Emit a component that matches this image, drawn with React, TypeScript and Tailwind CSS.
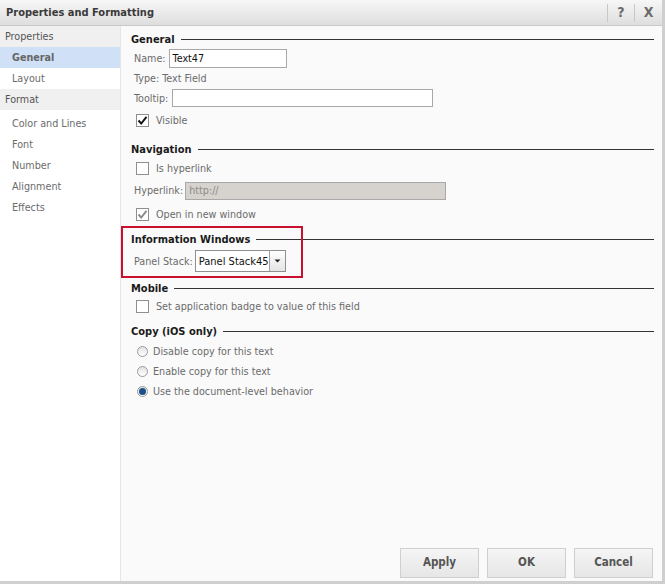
import React from "react";

const font = { fontFamily: "Tahoma, 'DejaVu Sans Condensed', 'Liberation Sans', Arial, sans-serif" };

function Header({ title }: { title: string }) {
  return (
    <div className="flex items-center h-[14px]">
      <span className="text-[11px] font-bold text-[#1a1a1a] leading-none pr-[6px]">{title}</span>
      <div className="flex-1 h-px bg-[#333]" />
    </div>
  );
}

function Check({ checked, disabled }: { checked?: boolean; disabled?: boolean }) {
  return (
    <div className="w-[13px] h-[13px] mt-px border border-[#8f8f8f] bg-white flex items-center justify-center shrink-0">
      {checked && (
        <svg width="11" height="11" viewBox="0 0 11 11">
          <path d="M1.5 5.5 L4.2 8.5 L9.5 1.8" fill="none" stroke={disabled ? "#8a8a8a" : "#111"} strokeWidth="1.9" />
        </svg>
      )}
    </div>
  );
}

function Radio({ checked }: { checked?: boolean }) {
  return (
    <div className="w-[11px] h-[11px] mt-px rounded-full border border-[#9a9a9a] bg-gradient-to-b from-[#e2e2e2] to-white flex items-center justify-center shrink-0">
      {checked && <div className="w-[7px] h-[7px] rounded-full bg-[#1d4f8a]" />}
    </div>
  );
}

function T({ children, className = "" }: { children: React.ReactNode; className?: string }) {
  return <span className={"pt-[2px] whitespace-nowrap " + className}>{children}</span>;
}

export default function App() {
  const side = [
    { t: "Properties", kind: "head" },
    { t: "General", kind: "sel" },
    { t: "Layout", kind: "item" },
    { t: "Format", kind: "head" },
    { t: "Color and Lines", kind: "item", first: true },
    { t: "Font", kind: "item" },
    { t: "Number", kind: "item" },
    { t: "Alignment", kind: "item" },
    { t: "Effects", kind: "item" },
  ];
  return (
    <div style={font} className="w-[665px] h-[584px] bg-[#cfcfcf] flex flex-col overflow-hidden text-[10.7px]">
      <div className="w-[662px] h-[581px] flex flex-col bg-white">
        {/* title bar */}
        <div className="h-[26px] flex items-center bg-gradient-to-b from-[#f7f7f7] to-[#dedede] border-b border-[#c9c9c9] shrink-0">
          <span className="pl-[6px] pt-px text-[11px] font-bold text-[#3a3a3a] flex-1">Properties and Formatting</span>
          <div className="w-px h-[18px] bg-[#c8c8c8]" />
          <span className="w-[26px] text-center text-[14px] font-bold text-[#6a6a6a]">?</span>
          <div className="w-px h-[18px] bg-[#c8c8c8]" />
          <span className="w-[27px] text-center text-[14px] font-bold text-[#6a6a6a]">X</span>
        </div>
        <div className="flex flex-1">
          {/* sidebar */}
          <div className="w-[121px] bg-white border-r border-[#e6e6e6] flex flex-col">
            {side.map((s, i) => (
              <div
                key={i}
                className={
                  "h-[21px] flex items-center " +
                  (s.first ? "mt-[3px] " : "") +
                  (s.kind === "head"
                    ? "bg-[#f0f0f0] pl-[5px] text-[#555]"
                    : s.kind === "sel"
                    ? "bg-[#cfe0f7] pl-[12px] font-bold text-[#666]"
                    : "pl-[12px] text-[#6b6b6b]")
                }
              >
                <T>{s.t}</T>
              </div>
            ))}
          </div>
          {/* content */}
          <div className="flex-1 bg-[#fafafa] flex flex-col pl-[10px] pr-[8px] pt-[6px]">
            <Header title="General" />
            <div className="h-[20px] mt-[2px] flex items-center pl-[3px] text-[#6b6b6b]">
              <T className="mr-[3px]">Name:</T>
              <div className="w-[118px] h-[19px] border border-[#a8a8a8] bg-white flex items-center pl-[3px] text-[#111] mt-px">
                <T>Text47</T>
              </div>
            </div>
            <div className="h-[20px] flex items-center pl-[3px] text-[#6b6b6b]"><T>Type: Text Field</T></div>
            <div className="h-[20px] flex items-center pl-[3px] text-[#6b6b6b]">
              <T className="mr-[4px]">Tooltip:</T>
              <div className="w-[261px] h-[18px] border border-[#a8a8a8] bg-white" />
            </div>
            <div className="h-[20px] mt-[2px] flex items-center pl-[5px] text-[#6b6b6b]">
              <Check checked />
              <T className="ml-[7px]">Visible</T>
            </div>

            <div className="mt-[12px]"><Header title="Navigation" /></div>
            <div className="h-[20px] mt-[2px] flex items-center pl-[5px] text-[#6b6b6b]">
              <Check />
              <T className="ml-[7px]">Is hyperlink</T>
            </div>
            <div className="h-[20px] mt-[2px] flex items-center pl-[3px] text-[#6b6b6b]">
              <T className="mr-[2px]">Hyperlink:</T>
              <div className="w-[261px] h-[18px] mt-px border border-[#a8a8a8] bg-[#d6d3ce] flex items-center pl-[3px] text-[#8a8a8a]">
                <T>http://</T>
              </div>
            </div>
            <div className="h-[20px] mt-[4px] flex items-center pl-[5px] text-[#6b6b6b]">
              <Check checked disabled />
              <T className="ml-[7px]">Open in new window</T>
            </div>

            <div className="mt-[2px] h-[52px] pt-[6px] flex flex-col relative">
              <Header title="Information Windows" />
              <div className="h-[22px] mt-[4px] flex items-center pl-[3px] text-[#6b6b6b]">
                <T className="mr-[2px]">Panel Stack:</T>
                <div className="w-[91px] h-[22px] border border-[#8f8f8f] bg-white flex items-center">
                  <T className="flex-1 pl-[3px] text-[#111] text-[11px]">Panel Stack45</T>
                  <div className="w-[18px] h-full border-l border-[#a0a0a0] bg-gradient-to-b from-white to-[#e4e4e4] flex items-center justify-center">
                    <svg width="7" height="4" viewBox="0 0 7 4"><path d="M0.5 0.5 L6.5 0.5 L3.5 3.5 Z" fill="#222" /></svg>
                  </div>
                </div>
              </div>
              <div className="absolute -left-[10px] top-0 w-[182px] h-[52px] border-2 border-[#c8102e] pointer-events-none" />
            </div>

            <div className="mt-[3px]"><Header title="Mobile" /></div>
            <div className="h-[20px] mt-px flex items-center pl-[5px] text-[#6b6b6b]">
              <Check />
              <T className="ml-[7px]">Set application badge to value of this field</T>
            </div>

            <div className="mt-[8px]"><Header title="Copy (iOS only)" /></div>
            <div className="h-[20px] mt-[3px] flex items-center pl-[6px] text-[#6b6b6b]">
              <Radio />
              <T className="ml-[5px]">Disable copy for this text</T>
            </div>
            <div className="h-[20px] flex items-center pl-[6px] text-[#6b6b6b]">
              <Radio />
              <T className="ml-[5px]">Enable copy for this text</T>
            </div>
            <div className="h-[20px] flex items-center pl-[6px] text-[#6b6b6b]">
              <Radio checked />
              <T className="ml-[5px]">Use the document-level behavior</T>
            </div>

            <div className="flex-1" />
            <div className="flex justify-end gap-[8px] pb-[3px] pr-[1px]">
              {["Apply", "OK", "Cancel"].map((b) => (
                <div key={b} className="w-[79px] h-[30px] border border-[#cfcfcf] bg-gradient-to-b from-[#f5f5f5] to-[#e6e6e6] flex items-center justify-center font-bold text-[11.5px] text-[#555]">
                  {b}
                </div>
              ))}
            </div>
          </div>
        </div>
      </div>
    </div>
  );
}
